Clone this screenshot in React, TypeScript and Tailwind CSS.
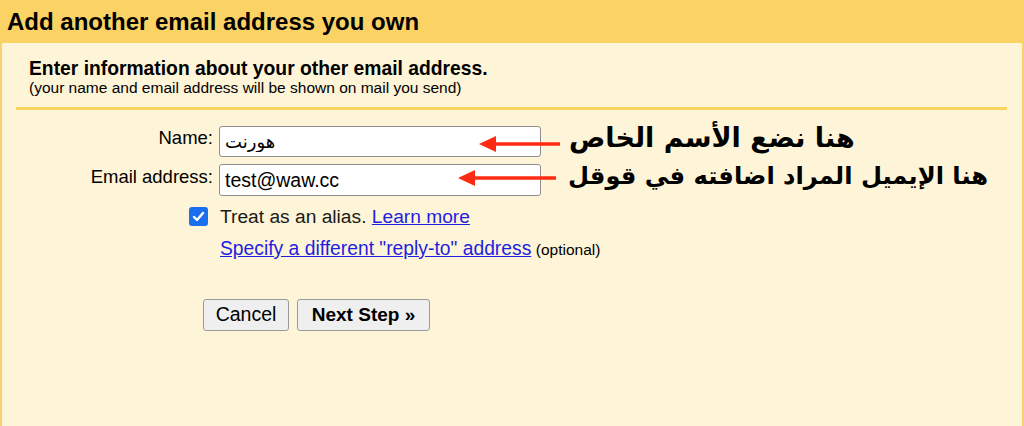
import React, { useState } from "react";

const Arrow = ({ width }: { width: number }) => (
	<svg width={width} height="18" viewBox={`0 0 ${width} 18`} className="block">
		<line x1="14" y1="9" x2={width} y2="9" stroke="#ff2a12" strokeWidth="3.5" />
		<polygon points="0,9 17,1 17,17" fill="#ff2a12" />
	</svg>
);

const App = () => {
	const [fields, setFields] = useState({
		name: "هورنت",
		email: "test@waw.cc",
		alias: true,
	});

	return (
		<div className="w-[1024px] h-[426px] overflow-hidden bg-[#fef4d7] font-['Liberation_Sans',Arial,sans-serif] text-black">
			{/* Header */}
			<div className="h-[43px] bg-[#fbd264] flex items-center px-[7px] pt-[1px]">
				<h1 className="text-[24px] leading-none font-bold">
					Add another email address you own
				</h1>
			</div>

			{/* Panel */}
			<div className="h-[383px] border-x-2 border-[#f9d36d] pt-[15px]">
				<div className="pl-[27px]">
					<h2 className="text-[19.3px] leading-[22px] font-bold">
						Enter information about your other email address.
					</h2>
					<p className="text-[15.5px] leading-[17px] mt-[-1px]">
						(your name and email address will be shown on mail you send)
					</p>
				</div>
				<div className="h-[3px] bg-[#fbd35f] ml-[14px] mr-[15px] mt-[11px]" />

				{/* Form */}
				<div className="mt-[16px] flex flex-col gap-[7px]">
					<div className="flex items-center">
						<label htmlFor="name" className="w-[212px] text-right text-[18.5px] leading-none pr-[1px] mt-[-7px]">
							Name:
						</label>
						<div className="relative ml-[5px]">
							<input
								id="name"
								type="text"
								value={fields.name}
								onChange={(e) => setFields({ ...fields, name: e.target.value })}
								className="w-[322px] h-[31px] bg-white border border-[#8f8f8f] rounded-[3px] px-[5px] text-[18px] font-['DejaVu_Sans',sans-serif] focus:outline-none"
							/>
							<div className="absolute left-[260px] top-[9px]">
								<Arrow width={81} />
							</div>
						</div>
						<span dir="rtl" className="ml-[28px] mt-[-8px] text-[27px] leading-none font-bold font-['DejaVu_Sans',sans-serif]">
							هنا نضع الأسم الخاص
						</span>
					</div>
					<div className="flex items-center">
						<label htmlFor="email" className="w-[212px] text-right text-[18.5px] leading-none pr-[1px] mt-[-6px]">
							Email address:
						</label>
						<div className="relative ml-[5px]">
							<input
								id="email"
								type="text"
								value={fields.email}
								onChange={(e) => setFields({ ...fields, email: e.target.value })}
								className="w-[322px] h-[32px] bg-white border border-[#8f8f8f] rounded-[3px] px-[5px] text-[19.5px] focus:outline-none"
							/>
							<div className="absolute left-[239px] top-[5px]">
								<Arrow width={98} />
							</div>
						</div>
						<span dir="rtl" className="ml-[27px] mt-[-8px] text-[24.2px] leading-none font-bold font-['DejaVu_Sans',sans-serif]">
							هنا الإيميل المراد اضافته في قوقل
						</span>
					</div>
				</div>

				{/* Alias */}
				<div className="mt-[11px] ml-[187px] flex items-center">
					<button
						type="button"
						onClick={() => setFields({ ...fields, alias: !fields.alias })}
						className="w-[19px] h-[19px] rounded-[3px] bg-[#1a6ff0] flex items-center justify-center"
					>
						{fields.alias && (
							<svg width="13" height="13" viewBox="0 0 13 13">
								<path d="M2 7l3 3 6-7" fill="none" stroke="white" strokeWidth="2.4" strokeLinecap="round" strokeLinejoin="round" />
							</svg>
						)}
					</button>
					<span className="ml-[12px] text-[19.2px] leading-[19px] text-[#1a1a1a]">
						Treat as an alias.{" "}
						<a href="#" className="text-[#1f1fe0] underline">
							Learn more
						</a>
					</span>
				</div>
				<div className="mt-[12px] ml-[218px] leading-[22px]">
					<a href="#" className="text-[19.3px] text-[#1f1fe0] underline">
						Specify a different "reply-to" address
					</a>{" "}
					<span className="text-[15.5px]">(optional)</span>
				</div>

				{/* Buttons */}
				<div className="mt-[38px] ml-[201px] flex gap-[8px]">
					<button className="w-[86px] h-[32px] bg-[#efefef] border border-[#9a9a9a] rounded-[3px] text-[19.5px]">
						Cancel
					</button>
					<button className="w-[133px] h-[32px] bg-[#efefef] border border-[#9a9a9a] rounded-[3px] text-[19px] font-bold">
						Next Step »
					</button>
				</div>
			</div>
		</div>
	);
};

export default App;
